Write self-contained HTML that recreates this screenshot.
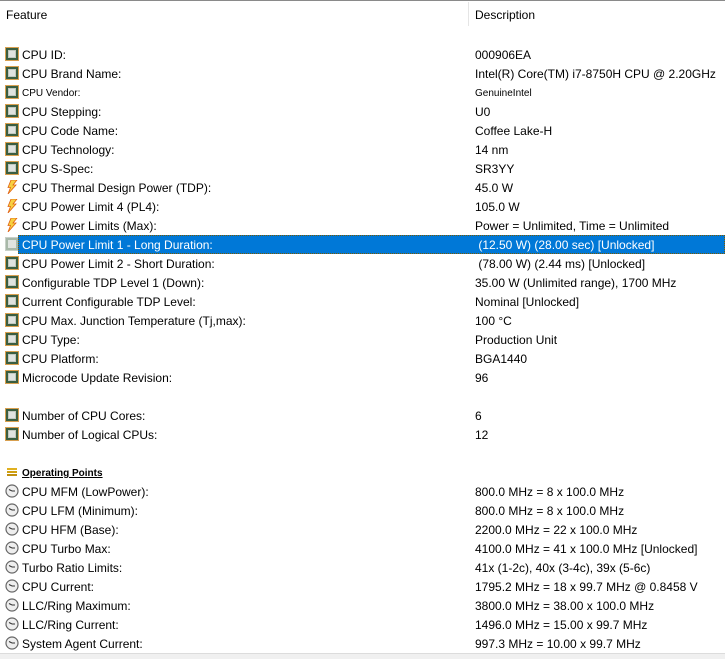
<!DOCTYPE html>
<html><head><meta charset="utf-8"><style>
body{margin:0;width:725px;height:658px;background:#fff;overflow:hidden;position:relative;font-family:"Liberation Sans",sans-serif;font-size:12px;color:#000}
.top{position:absolute;left:0;top:0;width:725px;height:1px;background:#8a8a8a}
.hdr{position:absolute;top:8px;font-size:12px}
.div{position:absolute;left:468px;top:2px;width:1px;height:24px;background:#e5e5e5}
.r{position:absolute;left:0;width:725px;height:19px;line-height:19px}
.f{position:absolute;left:22px;top:1px;white-space:nowrap}
.d{position:absolute;left:475px;top:1px;white-space:nowrap}
.sel{position:absolute;left:18px;top:0;width:707px;height:19px;background:#0078d7;outline:1px dotted #7a5a00;outline-offset:-1px}
.sel~.f,.sel~.d{color:#fff}
.ic{position:absolute;left:5px;top:2px;width:14px;height:14px}
.bot{position:absolute;left:0;top:653px;width:725px;height:5px;background:#f0f0f0;border-top:1px solid #dcdcdc}
</style></head><body>
<div class="top"></div>
<div class="hdr" style="left:6px">Feature</div>
<div class="div"></div>
<div class="hdr" style="left:475px">Description</div>
<svg width="0" height="0" style="position:absolute">
<defs>
<symbol id="chip" viewBox="0 0 14 14"><rect x="0" y="0" width="14" height="14" fill="#d8a050"/><rect x="1" y="1" width="12" height="12" fill="#3a5e40"/><rect x="3" y="3" width="8" height="8" fill="#c0c8c0"/><rect x="4" y="4" width="6" height="6" fill="#dfe3df"/></symbol>
<symbol id="chipg" viewBox="0 0 14 14"><rect x="0" y="0" width="14" height="14" fill="#c8d0c8"/><rect x="1" y="1" width="12" height="12" fill="#a8b8a8"/><rect x="3" y="3" width="8" height="8" fill="#e0e4e0"/></symbol>
<symbol id="bolt" viewBox="0 0 14 14"><path d="M6 0 L12 0 L8 5 L11 5 L3 14 L5.5 7.5 L3 7.5 Z" fill="#f7d040" stroke="#e06010" stroke-width="0.8"/></symbol>
<symbol id="clk" viewBox="0 0 14 14"><circle cx="7" cy="7" r="6" fill="#eee" stroke="#666" stroke-width="1.2"/><path d="M7 7 L4 5.5 M7 7 L10 7" stroke="#333" stroke-width="1"/></symbol>
<symbol id="list" viewBox="0 0 14 14"><rect x="2" y="3" width="10" height="2" fill="#e0b020"/><rect x="2" y="6" width="10" height="2" fill="#d0a010"/><rect x="2" y="9" width="10" height="2" fill="#c09010"/></symbol>
</defs></svg>

<div class="r" style="top:45px"><svg class="ic"><use href="#chip"/></svg><span class="f">CPU ID:</span><span class="d">000906EA</span></div>
<div class="r" style="top:64px"><svg class="ic"><use href="#chip"/></svg><span class="f">CPU Brand Name:</span><span class="d">Intel(R) Core(TM) i7-8750H CPU @ 2.20GHz</span></div>
<div class="r" style="top:83px"><svg class="ic"><use href="#chip"/></svg><span class="f" style="font-size:10px">CPU Vendor:</span><span class="d" style="font-size:10px">GenuineIntel</span></div>
<div class="r" style="top:102px"><svg class="ic"><use href="#chip"/></svg><span class="f">CPU Stepping:</span><span class="d">U0</span></div>
<div class="r" style="top:121px"><svg class="ic"><use href="#chip"/></svg><span class="f">CPU Code Name:</span><span class="d">Coffee Lake-H</span></div>
<div class="r" style="top:140px"><svg class="ic"><use href="#chip"/></svg><span class="f">CPU Technology:</span><span class="d">14 nm</span></div>
<div class="r" style="top:159px"><svg class="ic"><use href="#chip"/></svg><span class="f">CPU S-Spec:</span><span class="d">SR3YY</span></div>
<div class="r" style="top:178px"><svg class="ic"><use href="#bolt"/></svg><span class="f">CPU Thermal Design Power (TDP):</span><span class="d">45.0 W</span></div>
<div class="r" style="top:197px"><svg class="ic"><use href="#bolt"/></svg><span class="f">CPU Power Limit 4 (PL4):</span><span class="d">105.0 W</span></div>
<div class="r" style="top:216px"><svg class="ic"><use href="#bolt"/></svg><span class="f">CPU Power Limits (Max):</span><span class="d">Power = Unlimited, Time = Unlimited</span></div>
<div class="r" style="top:235px"><svg class="ic"><use href="#chipg"/></svg><div class="sel"></div><span class="f">CPU Power Limit 1 - Long Duration:</span><span class="d">&nbsp;(12.50 W) (28.00 sec) [Unlocked]</span></div>
<div class="r" style="top:254px"><svg class="ic"><use href="#chip"/></svg><span class="f">CPU Power Limit 2 - Short Duration:</span><span class="d">&nbsp;(78.00 W) (2.44 ms) [Unlocked]</span></div>
<div class="r" style="top:273px"><svg class="ic"><use href="#chip"/></svg><span class="f">Configurable TDP Level 1 (Down):</span><span class="d">35.00 W (Unlimited range), 1700 MHz</span></div>
<div class="r" style="top:292px"><svg class="ic"><use href="#chip"/></svg><span class="f">Current Configurable TDP Level:</span><span class="d">Nominal [Unlocked]</span></div>
<div class="r" style="top:311px"><svg class="ic"><use href="#chip"/></svg><span class="f">CPU Max. Junction Temperature (Tj,max):</span><span class="d">100 °C</span></div>
<div class="r" style="top:330px"><svg class="ic"><use href="#chip"/></svg><span class="f">CPU Type:</span><span class="d">Production Unit</span></div>
<div class="r" style="top:349px"><svg class="ic"><use href="#chip"/></svg><span class="f">CPU Platform:</span><span class="d">BGA1440</span></div>
<div class="r" style="top:368px"><svg class="ic"><use href="#chip"/></svg><span class="f">Microcode Update Revision:</span><span class="d">96</span></div>
<div class="r" style="top:406px"><svg class="ic"><use href="#chip"/></svg><span class="f">Number of CPU Cores:</span><span class="d">6</span></div>
<div class="r" style="top:425px"><svg class="ic"><use href="#chip"/></svg><span class="f">Number of Logical CPUs:</span><span class="d">12</span></div>
<div class="r" style="top:463px"><svg class="ic"><use href="#list"/></svg><span class="f" style="font-size:10px;font-weight:bold;text-decoration:underline">Operating Points</span></div>
<div class="r" style="top:482px"><svg class="ic"><use href="#clk"/></svg><span class="f">CPU MFM (LowPower):</span><span class="d">800.0 MHz = 8 x 100.0 MHz</span></div>
<div class="r" style="top:501px"><svg class="ic"><use href="#clk"/></svg><span class="f">CPU LFM (Minimum):</span><span class="d">800.0 MHz = 8 x 100.0 MHz</span></div>
<div class="r" style="top:520px"><svg class="ic"><use href="#clk"/></svg><span class="f">CPU HFM (Base):</span><span class="d">2200.0 MHz = 22 x 100.0 MHz</span></div>
<div class="r" style="top:539px"><svg class="ic"><use href="#clk"/></svg><span class="f">CPU Turbo Max:</span><span class="d">4100.0 MHz = 41 x 100.0 MHz [Unlocked]</span></div>
<div class="r" style="top:558px"><svg class="ic"><use href="#clk"/></svg><span class="f">Turbo Ratio Limits:</span><span class="d">41x (1-2c), 40x (3-4c), 39x (5-6c)</span></div>
<div class="r" style="top:577px"><svg class="ic"><use href="#clk"/></svg><span class="f">CPU Current:</span><span class="d">1795.2 MHz = 18 x 99.7 MHz @ 0.8458 V</span></div>
<div class="r" style="top:596px"><svg class="ic"><use href="#clk"/></svg><span class="f">LLC/Ring Maximum:</span><span class="d">3800.0 MHz = 38.00 x 100.0 MHz</span></div>
<div class="r" style="top:615px"><svg class="ic"><use href="#clk"/></svg><span class="f">LLC/Ring Current:</span><span class="d">1496.0 MHz = 15.00 x 99.7 MHz</span></div>
<div class="r" style="top:634px"><svg class="ic"><use href="#clk"/></svg><span class="f">System Agent Current:</span><span class="d">997.3 MHz = 10.00 x 99.7 MHz</span></div>
<div class="bot"></div>
</body></html>
